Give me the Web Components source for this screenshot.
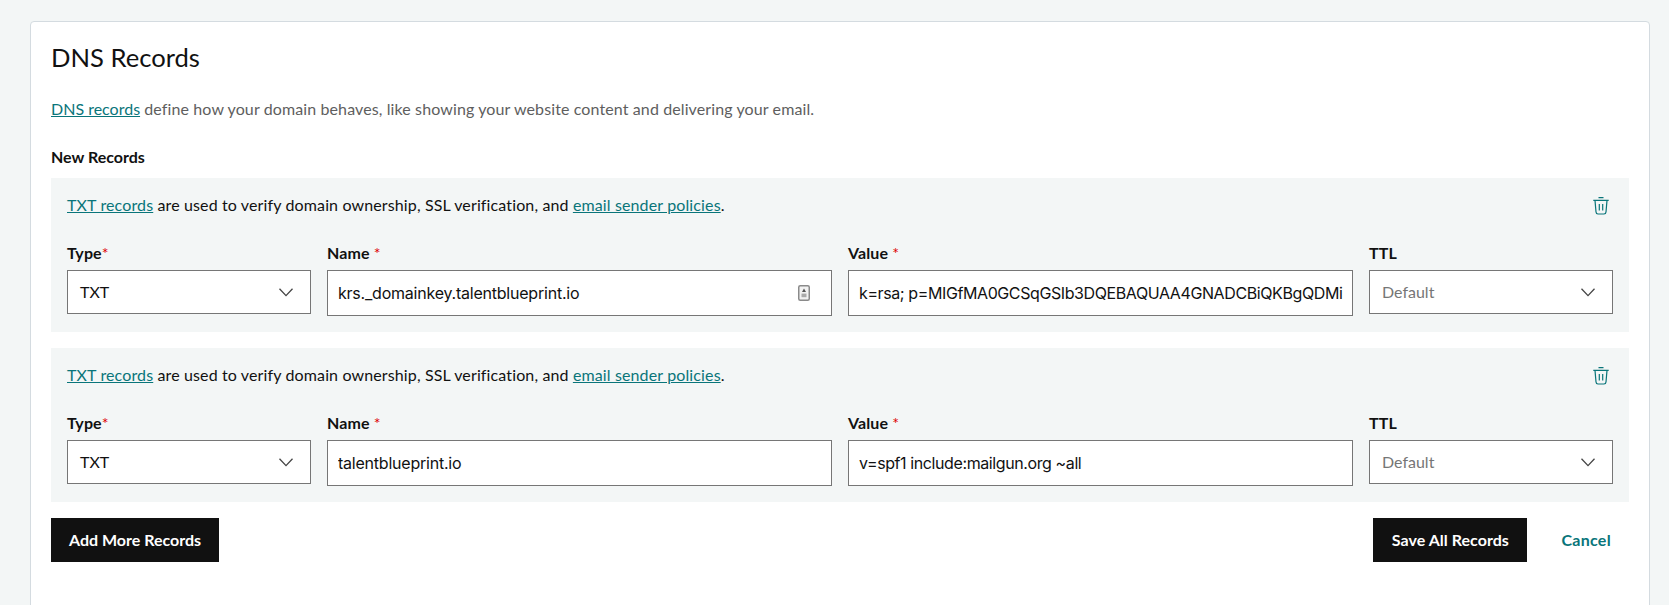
<!DOCTYPE html>
<html>
<head>
<meta charset="utf-8">
<title>DNS Records</title>
<style>
    html, body { margin: 0; height: 100%; overflow: hidden; }
    body { background: #f3f6f6; color: #111; font: 16px/24px Lato, "Liberation Sans", sans-serif; }
</style>
</head>
<body>
<dns-page></dns-page>

<script>
const chevron = `<svg width="14" height="9" viewBox="0 0 14 9" fill="none" stroke="#444" stroke-width="1.3"><path d="M.5.8 7 7.6 13.5.8"/></svg>`;

class DnsField extends HTMLElement
{
    connectedCallback()
    {
        let shadow = this.attachShadow({mode:"open"});
        let label = this.getAttribute("label");
        let gap = this.getAttribute("label") == "Type" ? "" : " ";
        let star = this.hasAttribute("required") ? `<span class="star">${gap}*</span>` : "";
        shadow.innerHTML =
        `
        <style>
            :host { display: block; min-width: 0; }
            label
            {
                display: block;
                height: 22px;
                margin-bottom: 6px;
                font-weight: 700;
                font-size: 16px;
                line-height: 22px;
                letter-spacing: .1px;
                color: #111;
            }
            .star { color: #d00; font-weight: 400; }
        </style>
        <label>${label}${star}</label>
        <slot></slot>
        `;
    }
}

class DnsSelect extends HTMLElement
{
    connectedCallback()
    {
        let shadow = this.attachShadow({mode:"open"});
        shadow.innerHTML =
        `
        <style>
            :host
            {
                display: flex;
                align-items: center;
                justify-content: space-between;
                box-sizing: border-box;
                height: 44px;
                padding: 0 17px 0 12px;
                background: #fff;
                border: 1px solid #767676;
                color: #111;
            }
            :host([placeholder]) { color: #767676; }
            svg { display: block; }
        </style>
        <slot></slot>
        ${chevron}
        `;
    }
}

class DnsInput extends HTMLElement
{
    connectedCallback()
    {
        let shadow = this.attachShadow({mode:"open"});
        shadow.innerHTML =
        `
        <style>
            :host
            {
                display: flex;
                align-items: center;
                gap: 8px;
                box-sizing: border-box;
                height: 46px;
                padding: 0 21px 0 10px;
                background: #fff;
                border: 1px solid #767676;
                color: #111;
                font-family: Inter, "Liberation Sans", sans-serif;
                letter-spacing: -.22px;
            }
            :host([tight]) { letter-spacing: -.4px; }
            :host([clip]) { padding-right: 0; }
            .text { flex: 1; min-width: 0; overflow: hidden; white-space: nowrap; }
            ::slotted(svg) { display: block; flex: none; }
        </style>
        <div class="text"><slot></slot></div>
        <slot name="icon"></slot>
        `;
    }
}

class DnsButton extends HTMLElement
{
    connectedCallback()
    {
        let shadow = this.attachShadow({mode:"open"});
        shadow.innerHTML =
        `
        <style>
            :host
            {
                display: inline-flex;
                align-items: center;
                justify-content: center;
                box-sizing: border-box;
                height: 44px;
                padding: 0 18px 1px;
                background: #111;
                color: #fff;
                font-weight: 700;
                cursor: pointer;
            }
            :host([wide]) { padding: 0 18.5px 1px; letter-spacing: .03px; }
            :host([plain]) { background: none; color: #09757a; padding: 0 18px 1px 34px; letter-spacing: .3px; }
        </style>
        <slot></slot>
        `;
    }
}

class DnsRecord extends HTMLElement
{
    connectedCallback()
    {
        let shadow = this.attachShadow({mode:"open"});
        shadow.innerHTML =
        `
        <style>
            :host
            {
                display: block;
                padding: 16px;
                background: #f3f6f6;
            }
            a { color: #09757a; }
            .top
            {
                display: flex;
                justify-content: space-between;
                align-items: center;
                height: 24px;
                margin-bottom: 24px;
                padding-right: 4px;
                letter-spacing: .13px;
            }
            .top span { position: relative; top: -1px; }
            .fields
            {
                display: grid;
                grid-template-columns: 244px 1fr 1fr 244px;
                gap: 16px;
                align-items: start;
            }
            svg { display: block; }
        </style>
        <div class="top">
            <span><a href="#">TXT records</a> are used to verify domain ownership, SSL verification, and <a href="#">email sender policies</a>.</span>
            <svg width="16" height="18" viewBox="0 0 16 18" fill="none" stroke="#09757a" stroke-width="1.2">
                <path d="M5.5.7h5M.3 3.4h15.4M2 3.4l1 11.6c.1 1.2.8 2 2 2h6c1.2 0 1.9-.8 2-2l1-11.6M6.3 7v6.5M9.7 7v6.5"/>
            </svg>
        </div>
        <div class="fields"><slot></slot></div>
        `;
    }
}

class DnsPage extends HTMLElement
{
    connectedCallback()
    {
        let shadow = this.attachShadow({mode:"open"});
        shadow.innerHTML =
        `
        <style>
            :host
            {
                display: block;
                box-sizing: border-box;
                height: 605px;
                padding: 21px 19px 0 30px;
            }
            .card
            {
                box-sizing: border-box;
                height: 620px;
                padding: 20px;
                background: #fff;
                border: 1px solid #d4dbe0;
                border-radius: 4px;
            }
            h1
            {
                margin: 0 0 25px;
                font-size: 25.6px;
                font-weight: 400;
                line-height: 30px;
                color: #111;
            }
            p { margin: 0 0 25px; color: #5e5e5e; letter-spacing: .11px; }
            p a { color: #09757a; letter-spacing: 0; }
            h2
            {
                margin: 0 0 10px;
                font-size: 16px;
                font-weight: 700;
                line-height: 22px;
                color: #111;
            }
            .records { display: flex; flex-direction: column; gap: 16px; }
            .actions
            {
                display: flex;
                justify-content: space-between;
                margin-top: 16px;
            }
            .right { display: flex; }
        </style>
        <div class="card">
            <h1>DNS Records</h1>
            <p><a href="#">DNS records</a> define how your domain behaves, like showing your website content and delivering your email.</p>
            <h2>New Records</h2>
            <div class="records">
                <dns-record>
                    <dns-field label="Type" required><dns-select>TXT</dns-select></dns-field>
                    <dns-field label="Name" required>
                        <dns-input>krs._domainkey.talentblueprint.io
                            <svg slot="icon" width="12" height="16" viewBox="0 0 12 16">
                                <rect x=".75" y=".75" width="10.5" height="14.5" rx="1.5" fill="#f2f2f2" stroke="#8a8a8a" stroke-width="1.5"/>
                                <path d="M6 3.6 8 7H4z" fill="#555"/>
                                <rect x="3.5" y="8.6" width="5" height="3.6" fill="#aaa"/>
                            </svg>
                        </dns-input>
                    </dns-field>
                    <dns-field label="Value" required><dns-input clip tight>k=rsa; p=MIGfMA0GCSqGSIb3DQEBAQUAA4GNADCBiQKBgQDMi</dns-input></dns-field>
                    <dns-field label="TTL"><dns-select placeholder>Default</dns-select></dns-field>
                </dns-record>
                <dns-record>
                    <dns-field label="Type" required><dns-select>TXT</dns-select></dns-field>
                    <dns-field label="Name" required><dns-input>talentblueprint.io</dns-input></dns-field>
                    <dns-field label="Value" required><dns-input tight>v=spf1 include:mailgun.org ~all</dns-input></dns-field>
                    <dns-field label="TTL"><dns-select placeholder>Default</dns-select></dns-field>
                </dns-record>
            </div>
            <div class="actions">
                <dns-button>Add More Records</dns-button>
                <div class="right">
                    <dns-button wide>Save All Records</dns-button>
                    <dns-button plain>Cancel</dns-button>
                </div>
            </div>
        </div>
        `;
    }
}

customElements.define("dns-field", DnsField);
customElements.define("dns-select", DnsSelect);
customElements.define("dns-input", DnsInput);
customElements.define("dns-button", DnsButton);
customElements.define("dns-record", DnsRecord);
customElements.define("dns-page", DnsPage);
</script>
</body>
</html>
